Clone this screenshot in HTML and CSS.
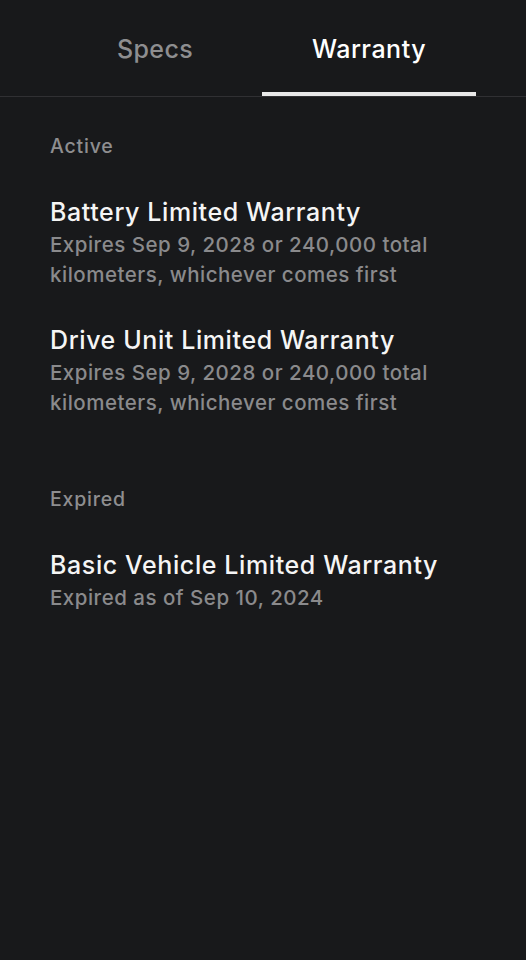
FILE: index.html
```html
<!DOCTYPE html>
<html lang="en">
<head>
<meta charset="utf-8">
<title>Warranty</title>
<link rel="stylesheet" href="styles.css">
</head>
<body>
<div class="screen">
  <nav class="tabs">
    <div class="tab">Specs</div>
    <div class="tab tab-active">Warranty</div>
  </nav>
  <main class="content">
    <section class="group">
      <h2 class="group-label">Active</h2>
      <div class="items">
        <div class="item">
          <div class="item-title">Battery Limited Warranty</div>
          <div class="item-sub">Expires Sep 9, 2028 or 240,000 total kilometers, whichever comes first</div>
        </div>
        <div class="item">
          <div class="item-title">Drive Unit Limited Warranty</div>
          <div class="item-sub">Expires Sep 9, 2028 or 240,000 total kilometers, whichever comes first</div>
        </div>
      </div>
    </section>
    <section class="group">
      <h2 class="group-label">Expired</h2>
      <div class="items">
        <div class="item">
          <div class="item-title">Basic Vehicle Limited Warranty</div>
          <div class="item-sub">Expired as of Sep 10, 2024</div>
        </div>
      </div>
    </section>
  </main>
</div>
</body>
</html>
```

FILE: styles.css
```css
* { box-sizing: border-box; }
html, body {
  margin: 0;
  padding: 0;
  background: #18191b;
}
body {
  font-family: Inter, "Noto Sans", "Liberation Sans", sans-serif;
  color: #f2f2f2;
  -webkit-font-smoothing: antialiased;
}
.screen {
  width: 526px;
  min-height: 960px;
  background: #18191b;
}
.tabs {
  display: grid;
  grid-template-columns: 214px 214px;
  padding: 0 49px 0 48px;
  border-bottom: 1px solid #303033;
}
.tab {
  padding: 34px 0 28px;
  text-align: center;
  font-size: 25px;
  line-height: 30px;
  font-weight: 500;
  color: #8e8e90;
  border-bottom: 4px solid transparent;
  letter-spacing: 0.4px;
}
.tab-active {
  color: #ffffff;
  border-bottom-color: #e8e8e8;
  letter-spacing: 0.5px;
}
.content {
  padding: 37px 50px 0;
  display: flex;
  flex-direction: column;
  gap: 69px;
}
.group-label {
  margin: 0;
  font-size: 19.5px;
  line-height: 24px;
  font-weight: 500;
  color: #8e8e90;
  letter-spacing: 0.8px;
}
.items {
  margin-top: 39px;
  display: flex;
  flex-direction: column;
  gap: 35px;
}
.item-title {
  font-size: 25px;
  line-height: 30px;
  font-weight: 500;
  color: #f5f5f5;
  letter-spacing: 0.6px;
}
.item-sub {
  margin-top: 3px;
  font-size: 20.5px;
  line-height: 30px;
  font-weight: 500;
  color: #8a8a8c;
  letter-spacing: 0.5px;
}
```
